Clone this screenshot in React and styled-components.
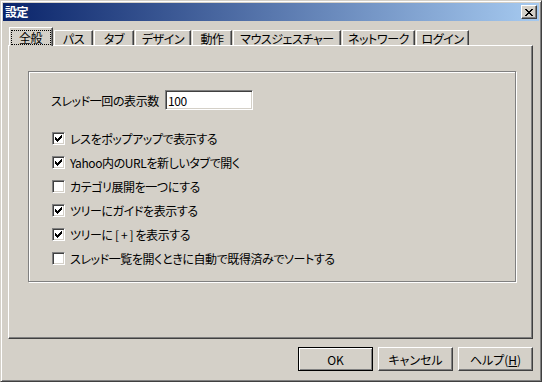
import React from "react";
import styled, { createGlobalStyle } from "styled-components";

const GlobalStyle = createGlobalStyle`
  html, body {
    margin: 0;
    padding: 0;
    background: #d4d0c8;
  }
  body {
    font-family: "Noto Sans CJK JP", "Noto Sans", sans-serif;
    font-size: 12px;
    letter-spacing: -0.4px;
    color: #000;
    font-feature-settings: "palt";
  }
`;

const tabs = [
  { label: "全般", w: 44 },
  { label: "パス", w: 39 },
  { label: "タブ", w: 40 },
  { label: "デザイン", w: 56 },
  { label: "動作", w: 40 },
  { label: "マウスジェスチャー", w: 108 },
  { label: "ネットワーク", w: 73 },
  { label: "ログイン", w: 53 },
];

const options = [
  { label: "レスをポップアップで表示する", checked: true },
  { label: "Yahoo内のURLを新しいタブで開く", checked: true },
  { label: "カテゴリ展開を一つにする", checked: false },
  { label: "ツリーにガイドを表示する", checked: true },
  { label: "ツリーに [ + ] を表示する", checked: true },
  { label: "スレッド一覧を開くときに自動で既得済みでソートする", checked: false },
];

// classic 7x7 check mark, one column of 3 px per step
const checkCols = [2, 3, 4, 3, 2, 1, 0];

const CheckMark = () => (
  <svg width="7" height="7" viewBox="0 0 7 7" shapeRendering="crispEdges">
    {checkCols.map((top, x) => (
      <rect key={x} x={x} y={top} width="1" height="3" fill="#000" />
    ))}
  </svg>
);

// 8x7 close glyph
const closeRows = [
  [0, 1, 6, 7],
  [1, 2, 5, 6],
  [2, 3, 4, 5],
  [3, 4],
  [2, 3, 4, 5],
  [1, 2, 5, 6],
  [0, 1, 6, 7],
];

const CloseGlyph = () => (
  <svg width="8" height="7" viewBox="0 0 8 7" shapeRendering="crispEdges">
    {closeRows.map((cols, y) =>
      cols.map(x => <rect key={`${x}-${y}`} x={x} y={y} width="1" height="1" fill="#000" />)
    )}
  </svg>
);

const App = () => {
  return (
    <>
      <GlobalStyle />
      <Window>
        <TitleBar>
          <Title>設定</Title>
          <CloseButton>
            <CloseGlyph />
          </CloseButton>
        </TitleBar>
        <Client>
          <TabRow>
            {tabs.map((t, i) => (
              <Tab key={t.label} $w={t.w} $active={i === 0}>
                {i === 0 ? <FocusRing>{t.label}</FocusRing> : t.label}
              </Tab>
            ))}
          </TabRow>
          <Panel>
            <GroupBox>
              <CountRow>
                <CountLabel>スレッド一回の表示数</CountLabel>
                <TextBox>100</TextBox>
              </CountRow>
              <CheckList>
                {options.map(o => (
                  <CheckRow key={o.label}>
                    <Box>{o.checked && <CheckMark />}</Box>
                    <span>{o.label}</span>
                  </CheckRow>
                ))}
              </CheckList>
            </GroupBox>
          </Panel>
          <ButtonRow>
            <Button $default>OK</Button>
            <Button>キャンセル</Button>
            <Button>ヘルプ(<u>H</u>)</Button>
          </ButtonRow>
        </Client>
      </Window>
    </>
  );
};

export default App;

const Window = styled.div`
  box-sizing: border-box;
  width: 542px;
  height: 382px;
  display: flex;
  flex-direction: column;
  padding: 2px;
  background: #d4d0c8;
  border: 1px solid;
  border-color: #d4d0c8 #404040 #404040 #d4d0c8;
  box-shadow: inset 1px 1px 0 #fff, inset -1px -1px 0 #808080;
`;

const TitleBar = styled.div`
  height: 18px;
  display: flex;
  align-items: center;
  justify-content: space-between;
  padding: 0 2px;
  background: linear-gradient(to right, #0a246a, #a6caf0);
`;

const Title = styled.span`
  color: #fff;
  font-weight: bold;
  font-size: 12px;
  line-height: 14px;
`;

const CloseButton = styled.div`
  box-sizing: border-box;
  width: 16px;
  height: 14px;
  display: flex;
  align-items: center;
  justify-content: center;
  padding-right: 1px;
  background: #d4d0c8;
  border: 1px solid;
  border-color: #fff #404040 #404040 #fff;
  box-shadow: inset -1px -1px 0 #808080;
`;

const Client = styled.div`
  flex: 1;
  padding: 6px 0 0 5px;
`;

const TabRow = styled.div`
  display: flex;
  align-items: flex-end;
  gap: 1px;
  height: 18px;
  padding-left: 1px;
`;

const Tab = styled.div`
  box-sizing: border-box;
  width: ${p => p.$w}px;
  height: ${p => (p.$active ? 19 : 15)}px;
  margin-bottom: ${p => (p.$active ? -1 : 0)}px;
  position: relative;
  z-index: ${p => (p.$active ? 1 : 0)};
  display: flex;
  align-items: center;
  justify-content: center;
  white-space: nowrap;
  line-height: 13px;
  background: #d4d0c8;
  border-top: 1px solid #fff;
  border-left: 1px solid #fff;
  border-right: 1px solid #404040;
  box-shadow: inset -1px 0 0 #808080;
`;

const FocusRing = styled.span`
  box-sizing: border-box;
  width: 40px;
  height: 15px;
  margin-right: 1px;
  display: flex;
  align-items: center;
  justify-content: center;
  border: 1px dotted #000;
`;

const Panel = styled.div`
  box-sizing: border-box;
  width: 525px;
  height: 294px;
  padding: 25px 0 0 19px;
  border-top: 1px solid #fff;
  border-left: 1px solid #fff;
  border-right: 1px solid #404040;
  border-bottom: 1px solid #404040;
  box-shadow: inset -1px -1px 0 #808080;
`;

const GroupBox = styled.div`
  box-sizing: border-box;
  width: 488px;
  height: 211px;
  padding: 18px 0 0 22px;
  border: 1px solid #808080;
  box-shadow: 1px 1px 0 #fff, inset 1px 1px 0 #fff;
`;

const CountRow = styled.div`
  display: flex;
  align-items: center;
  height: 20px;
`;

const CountLabel = styled.span`
  width: 114px;
  white-space: nowrap;
`;

const TextBox = styled.div`
  box-sizing: border-box;
  width: 88px;
  height: 20px;
  display: flex;
  align-items: center;
  padding-left: 2px;
  background: #fff;
  border: 1px solid;
  border-color: #808080 #fff #fff #808080;
  box-shadow: inset 1px 1px 0 #404040, inset -1px -1px 0 #d4d0c8;
`;

const CheckList = styled.div`
  display: flex;
  flex-direction: column;
  margin: 16px 0 0 1px;
`;

const CheckRow = styled.div`
  display: flex;
  align-items: center;
  gap: 5px;
  height: 24px;
  white-space: nowrap;
`;

const Box = styled.div`
  box-sizing: border-box;
  width: 13px;
  height: 13px;
  flex: none;
  display: flex;
  align-items: center;
  justify-content: center;
  background: #fff;
  border: 1px solid;
  border-color: #808080 #fff #fff #808080;
  box-shadow: inset 1px 1px 0 #404040, inset -1px -1px 0 #d4d0c8;
`;

const ButtonRow = styled.div`
  display: flex;
  justify-content: flex-end;
  gap: 5px;
  width: 525px;
  margin-top: 8px;
`;

const Button = styled.button`
  box-sizing: border-box;
  width: 75px;
  height: 24px;
  padding: 0;
  font: inherit;
  color: #000;
  background: #d4d0c8;
  border: 1px solid;
  border-color: ${p => (p.$default ? "#000" : "#fff #404040 #404040 #fff")};
  box-shadow: ${p =>
    p.$default
      ? "inset 1px 1px 0 #fff, inset -1px -1px 0 #808080"
      : "inset -1px -1px 0 #808080"};
  u {
    text-decoration: underline;
  }
`;
